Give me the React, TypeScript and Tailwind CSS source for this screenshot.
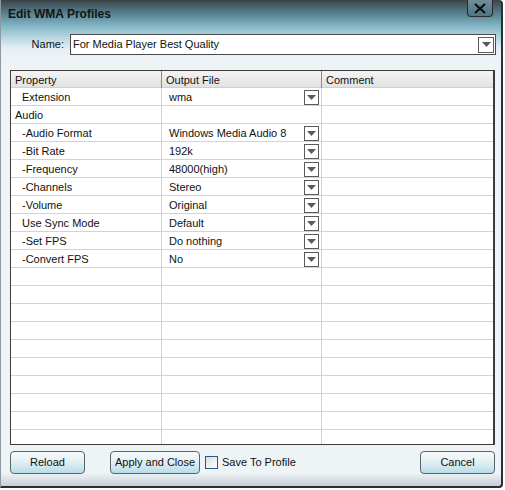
import React from "react";

const rows: { label: string; value: string; dd: boolean; indent: boolean }[] = [
  { label: "Extension", value: "wma", dd: true, indent: true },
  { label: "Audio", value: "", dd: false, indent: false },
  { label: "-Audio Format", value: "Windows Media Audio 8", dd: true, indent: true },
  { label: "-Bit Rate", value: "192k", dd: true, indent: true },
  { label: "-Frequency", value: "48000(high)", dd: true, indent: true },
  { label: "-Channels", value: "Stereo", dd: true, indent: true },
  { label: "-Volume", value: "Original", dd: true, indent: true },
  { label: "Use Sync Mode", value: "Default", dd: true, indent: true },
  { label: "-Set FPS", value: "Do nothing", dd: true, indent: true },
  { label: "-Convert FPS", value: "No", dd: true, indent: true },
];

function DropBtn({ big }: { big?: boolean }) {
  return (
    <div
      className={`${big ? "w-[16px] h-[16px]" : "w-[15px] h-[15px]"} border border-[#5a5a5a] bg-white flex items-center justify-center shrink-0`}
    >
      <svg width="9" height="5" viewBox="0 0 9 5">
        <path d="M0 0 H9 L4.5 5 Z" fill="#5a5a5a" />
      </svg>
    </div>
  );
}

function Btn({ children, w }: { children: React.ReactNode; w: string }) {
  return (
    <div
      className={`${w} h-[23px] rounded-[4px] border border-[#5b6468] bg-[linear-gradient(to_bottom,#f8fbfc_0%,#e4f0f4_45%,#b9dce8_100%)] flex items-center justify-center text-[11px] text-[#111]`}
    >
      {children}
    </div>
  );
}

export default function App() {
  const empty = Array.from({ length: 11 });
  return (
    <div
      className="w-[505px] h-[490px] bg-white overflow-hidden"
      style={{ fontFamily: '"Liberation Sans", Arial, sans-serif' }}
    >
      <div className="w-[503px] h-[488px] border-l border-l-[#8c9aa0] border-r-2 border-r-[#2a2f31] border-b-2 border-b-[#2a2f31] border-t border-t-[#3a4245] rounded-tr-[4px] rounded-br-[4px] flex flex-col bg-[linear-gradient(to_bottom,#3c4a50_0px,#5c8796_14px,#7fb2c2_24px,#b5d5df_36px,#e6f0f4_48px,#eef3f6_60px,#eef3f6_472px,#c4ccd0_486px)]">
        <div className="h-[25px] flex items-start justify-between pl-[7px] pr-[8px]">
          <div className="text-[12px] font-bold text-[#151515] mt-[4px]">Edit WMA Profiles</div>
          <div className="w-[26px] h-[17px] -mt-[1px] border border-[#2b2b2b] border-t-0 rounded-b-[4px] bg-[linear-gradient(to_bottom,#6e8e98,#4f7684)] flex items-center justify-center">
            <svg width="12" height="11" viewBox="0 0 12 11">
              <path d="M1 1 L11 10 M11 1 L1 10" stroke="#0c0c0c" strokeWidth="2.2" />
            </svg>
          </div>
        </div>
        <div className="flex items-center mt-[8px] h-[21px]">
          <div className="w-[64px] text-right text-[11px] text-[#111] pr-[1px]">Name:</div>
          <div className="ml-[5px] w-[426px] h-[21px] border border-[#4a4a4a] bg-white flex items-center justify-between pl-[2px] pr-[1px]">
            <span className="text-[11px] text-[#111]">For Media Player Best Quality</span>
            <DropBtn big />
          </div>
        </div>
        <div className="mt-[15px] ml-[9px] w-[485px] h-[375px] border border-[#3c3c3c] border-r-2 bg-white overflow-hidden">
          <div className="grid grid-cols-[151px_160px_1fr] h-[17px] bg-[linear-gradient(to_bottom,#f4f4f4,#e2e2e2)] border-b border-b-[#cfcfcf] text-[11px] text-[#111]">
            <div className="pl-[4px] border-r border-r-[#8a8a8a] leading-[17px] pt-[1px]">Property</div>
            <div className="pl-[4px] border-r border-r-[#8a8a8a] leading-[17px] pt-[1px]">Output File</div>
            <div className="pl-[4px] leading-[17px] pt-[1px]">Comment</div>
          </div>
          {rows.map((r, i) => (
            <div
              key={i}
              className="grid grid-cols-[151px_160px_1fr] h-[18px] border-b border-b-[#d6d3cc] text-[11px] text-[#111]"
            >
              <div className={`${r.indent ? "pl-[11px]" : "pl-[4px]"} border-r border-r-[#d6d3cc] leading-[17px] pt-[1px]`}>
                {r.label}
              </div>
              <div className="pl-[7px] pr-[2px] border-r border-r-[#d6d3cc] flex items-center justify-between">
                <span className="leading-[17px] pt-[1px]">{r.value}</span>
                {r.dd && <DropBtn />}
              </div>
              <div />
            </div>
          ))}
          {empty.map((_, i) => (
            <div key={"e" + i} className="grid grid-cols-[151px_160px_1fr] h-[18px] border-b border-b-[#d6d3cc]">
              <div className="border-r border-r-[#d6d3cc]" />
              <div className="border-r border-r-[#d6d3cc]" />
              <div />
            </div>
          ))}
        </div>
        <div className="flex items-center mt-[6px] ml-[9px] w-[485px]">
          <Btn w="w-[75px]">Reload</Btn>
          <div className="ml-[25px]">
            <Btn w="w-[90px]">Apply and Close</Btn>
          </div>
          <div className="ml-[5px] w-[13px] h-[13px] border border-[#2d5585] bg-[linear-gradient(135deg,#dcdcdc,#ffffff)]" />
          <span className="ml-[4px] text-[11px] text-[#111]">Save To Profile</span>
          <div className="ml-auto">
            <Btn w="w-[75px]">Cancel</Btn>
          </div>
        </div>
      </div>
    </div>
  );
}
